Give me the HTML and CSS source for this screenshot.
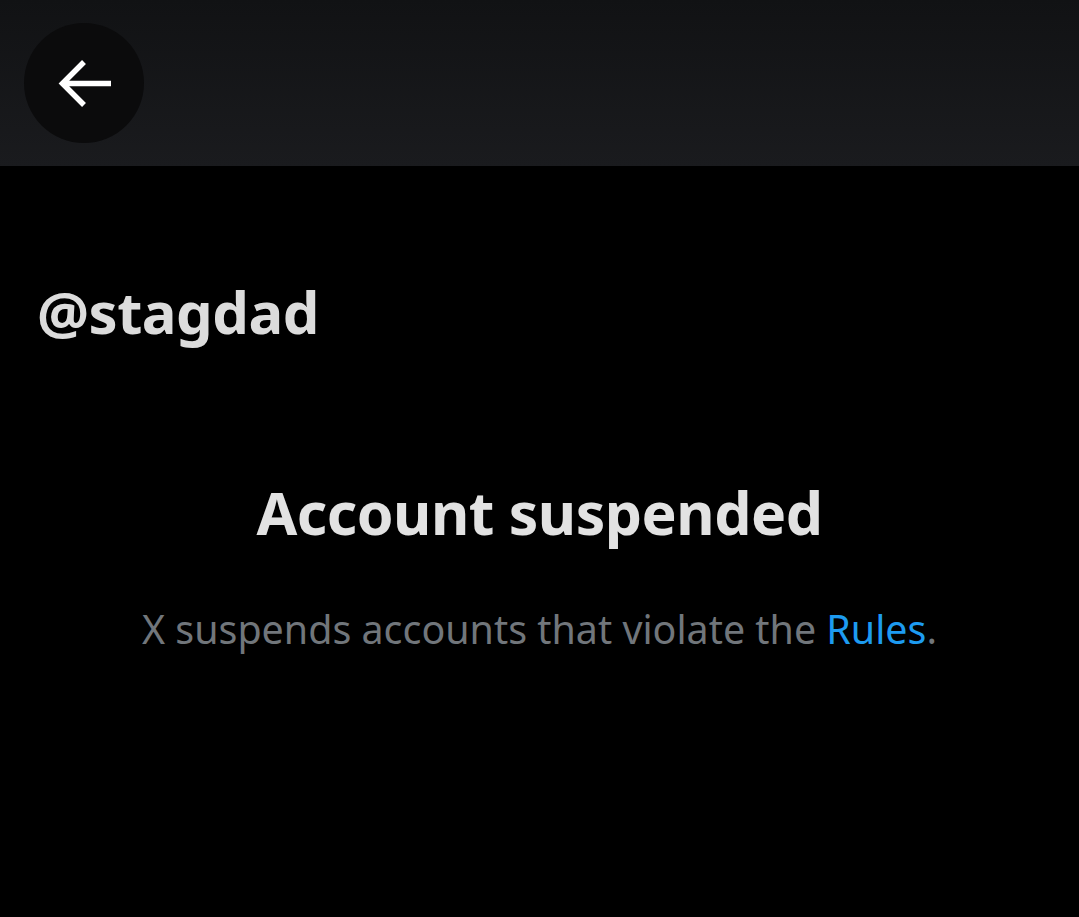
FILE: index.html
```html
<!DOCTYPE html>
<html>
<head>
<meta charset="utf-8">
<link rel="stylesheet" href="styles.css">
</head>
<body>
<header class="topbar">
  <button class="back" aria-label="Back">
    <svg viewBox="0 0 120 120" width="120" height="120"><path d="M87 60.5H38M60 39L38.5 60.5L60 82" fill="none" stroke="#ffffff" stroke-width="5.5" stroke-linejoin="miter"/></svg>
  </button>
</header>
<main class="content">
  <div class="handle">@stagdad</div>
  <section class="notice">
    <h1 class="title">Account suspended</h1>
    <p class="desc">X suspends accounts that violate the <a class="link" href="#">Rules</a>.</p>
  </section>
</main>
</body>
</html>
```
FILE: styles.css
```css
html, body {
  margin: 0;
  padding: 0;
  background: #000000;
  height: 100%;
}
body {
  font-family: "Noto Sans", "Open Sans", sans-serif;
  color: #e2e3e4;
}
.topbar {
  height: 166px;
  background: linear-gradient(180deg, #111214 0%, #1a1b1e 100%);
  display: flex;
  align-items: center;
  padding-left: 24px;
  box-sizing: border-box;
}
.back {
  width: 120px;
  height: 120px;
  border-radius: 50%;
  border: none;
  background: #0b0b0c;
  display: flex;
  align-items: center;
  justify-content: center;
  padding: 0;
}
.back svg {
  display: block;
}
.content {
  padding: 0 37px;
}
.handle {
  margin-top: 111px;
  font-size: 58px;
  font-weight: 700;
  line-height: 70px;
  color: #dcdcdc;
  letter-spacing: -0.5px;
}
.notice {
  text-align: center;
  margin-top: 130px;
}
.title {
  margin: 0;
  font-size: 59px;
  font-weight: 700;
  line-height: 70px;
  color: #e2e2e2;
  letter-spacing: -0.5px;
}
.desc {
  margin: 58px 0 0;
  font-size: 39.4px;
  line-height: 48px;
  color: #71767b;
}
.link {
  color: #1d9bf0;
  text-decoration: none;
}
```
